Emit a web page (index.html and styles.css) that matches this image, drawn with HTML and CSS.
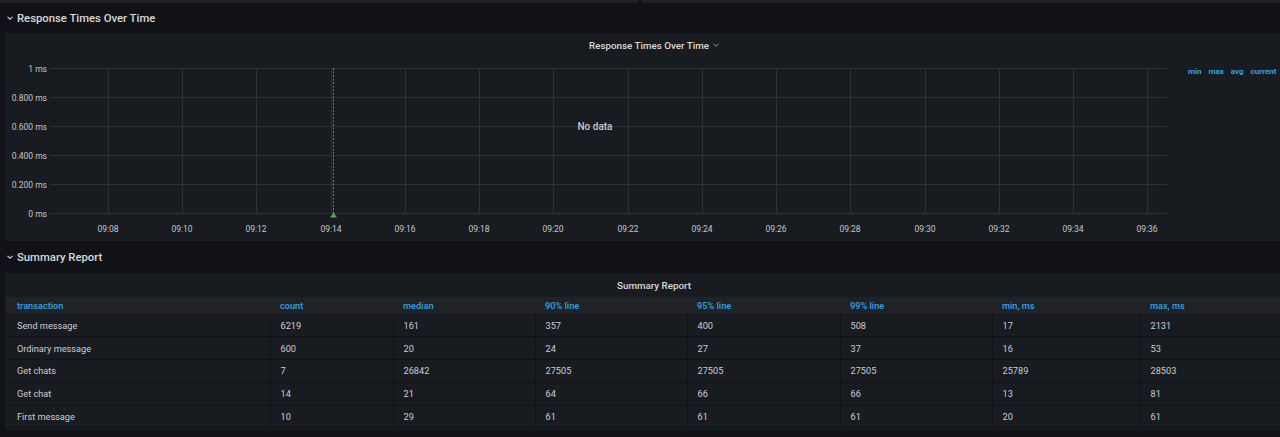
FILE: index.html
```html
<!DOCTYPE html>
<html lang="en">
<head>
<meta charset="utf-8">
<title>Dashboard</title>
<link rel="stylesheet" href="styles.css">
</head>
<body>
<div class="top-strip">
  <div class="strip-panel strip-left"></div>
  <div class="strip-panel strip-right"></div>
</div>

<div class="row-header">
  <svg class="chev" width="6" height="4" viewBox="0 0 6 4"><path d="M0.5 0.8 L3 3.2 L5.5 0.8" fill="none" stroke="#c7d0d9" stroke-width="1.1"/></svg>
  <span class="row-title">Response Times Over Time</span>
</div>

<section class="panel chart-panel">
  <div class="panel-title">Response Times Over Time
    <svg class="title-chev" width="6" height="4" viewBox="0 0 6 4"><path d="M0.5 0.8 L3 3.2 L5.5 0.8" fill="none" stroke="#8e8e8e" stroke-width="1"/></svg>
  </div>
  <div class="chart-body">
    <svg class="plot" width="1170" height="184" viewBox="0 0 1170 184">
      <g stroke="#2f3136" stroke-width="1">
        <line x1="45" y1="11.5" x2="1162" y2="11.5"/>
        <line x1="45" y1="40.5" x2="1162" y2="40.5"/>
        <line x1="45" y1="69.5" x2="1162" y2="69.5"/>
        <line x1="45" y1="98.5" x2="1162" y2="98.5"/>
        <line x1="45" y1="127.5" x2="1162" y2="127.5"/>
        <line x1="45" y1="156.5" x2="1162" y2="156.5"/>
        <line x1="103.5" y1="11" x2="103.5" y2="156"/>
        <line x1="177.5" y1="11" x2="177.5" y2="156"/>
        <line x1="251.5" y1="11" x2="251.5" y2="156"/>
        <line x1="326.5" y1="11" x2="326.5" y2="156"/>
        <line x1="400.5" y1="11" x2="400.5" y2="156"/>
        <line x1="474.5" y1="11" x2="474.5" y2="156"/>
        <line x1="548.5" y1="11" x2="548.5" y2="156"/>
        <line x1="623.5" y1="11" x2="623.5" y2="156"/>
        <line x1="697.5" y1="11" x2="697.5" y2="156"/>
        <line x1="771.5" y1="11" x2="771.5" y2="156"/>
        <line x1="845.5" y1="11" x2="845.5" y2="156"/>
        <line x1="920.5" y1="11" x2="920.5" y2="156"/>
        <line x1="994.5" y1="11" x2="994.5" y2="156"/>
        <line x1="1068.5" y1="11" x2="1068.5" y2="156"/>
        <line x1="1142.5" y1="11" x2="1142.5" y2="156"/>
      </g>
      <g class="ylab" text-anchor="end">
        <text x="42" y="14.5">1 ms</text>
        <text x="42" y="43.5">0.800 ms</text>
        <text x="42" y="72.5">0.600 ms</text>
        <text x="42" y="101.5">0.400 ms</text>
        <text x="42" y="130.5">0.200 ms</text>
        <text x="42" y="159.5">0 ms</text>
      </g>
      <g class="xlab" text-anchor="middle">
        <text x="103" y="174.5">09:08</text>
        <text x="177" y="174.5">09:10</text>
        <text x="251" y="174.5">09:12</text>
        <text x="326" y="174.5">09:14</text>
        <text x="400" y="174.5">09:16</text>
        <text x="474" y="174.5">09:18</text>
        <text x="548" y="174.5">09:20</text>
        <text x="623" y="174.5">09:22</text>
        <text x="697" y="174.5">09:24</text>
        <text x="771" y="174.5">09:26</text>
        <text x="845" y="174.5">09:28</text>
        <text x="920" y="174.5">09:30</text>
        <text x="994" y="174.5">09:32</text>
        <text x="1068" y="174.5">09:34</text>
        <text x="1142" y="174.5">09:36</text>
      </g>
      <line x1="328.5" y1="11" x2="328.5" y2="156" stroke="#4f9a44" stroke-width="1" stroke-dasharray="2 1.5"/>
      <polygon points="325,160.5 332,160.5 328.5,155.5" fill="#56a64b"/>
      <text class="nodata" x="590" y="73" text-anchor="middle">No data</text>
    </svg>
    <div class="legend">
      <span>min</span><span>max</span><span>avg</span><span>current</span>
    </div>
  </div>
</section>

<div class="row-header row-header-2">
  <svg class="chev" width="6" height="4" viewBox="0 0 6 4"><path d="M0.5 0.8 L3 3.2 L5.5 0.8" fill="none" stroke="#c7d0d9" stroke-width="1.1"/></svg>
  <span class="row-title">Summary Report</span>
</div>

<section class="panel table-panel">
  <div class="panel-title">Summary Report</div>
  <table class="report">
    <colgroup>
      <col class="c1"><col class="c2"><col class="c3"><col class="c4"><col class="c5"><col class="c6"><col class="c7"><col class="c8">
    </colgroup>
    <thead>
      <tr><th>transaction</th><th>count</th><th>median</th><th>90% line</th><th>95% line</th><th>99% line</th><th>min, ms</th><th>max, ms</th></tr>
    </thead>
    <tbody>
      <tr><td>Send message</td><td>6219</td><td>161</td><td>357</td><td>400</td><td>508</td><td>17</td><td>2131</td></tr>
      <tr><td>Ordinary message</td><td>600</td><td>20</td><td>24</td><td>27</td><td>37</td><td>16</td><td>53</td></tr>
      <tr><td>Get chats</td><td>7</td><td>26842</td><td>27505</td><td>27505</td><td>27505</td><td>25789</td><td>28503</td></tr>
      <tr><td>Get chat</td><td>14</td><td>21</td><td>64</td><td>66</td><td>66</td><td>13</td><td>81</td></tr>
      <tr><td>First message</td><td>10</td><td>29</td><td>61</td><td>61</td><td>61</td><td>20</td><td>61</td></tr>
    </tbody>
  </table>
</section>
</body>
</html>
```

FILE: styles.css
```css
* { box-sizing: border-box; }

html, body {
  margin: 0;
  padding: 0;
  background: #111217;
  height: 437px;
  overflow: hidden;
  font-family: Roboto, "Liberation Sans", Arial, sans-serif;
  color: #ccccdc;
}

.top-strip {
  display: flex;
  gap: 4px;
  height: 3px;
}
.strip-panel { background: #1d1f24; height: 3px; }
.strip-left { width: 638px; }
.strip-right { flex: 1; }

.row-header {
  height: 30px;
  display: flex;
  align-items: center;
  padding-left: 7px;
  gap: 4px;
}
.row-header-2 { height: 32px; }

.row-title {
  font-size: 11.3px;
  font-weight: 500;
  color: #d8d9da;
}

.panel {
  background: #181b1f;
  margin-left: 5px;
  width: 1298px;
}

.panel-title {
  height: 24px;
  display: flex;
  align-items: center;
  justify-content: center;
  gap: 4px;
  font-size: 9.8px;
  font-weight: 500;
  color: #d8d9da;
}

.chart-panel { height: 208px; }
.chart-body { display: flex; }
.plot { display: block; flex: none; }

.ylab text, .xlab text {
  font-family: Roboto, "Liberation Sans", Arial, sans-serif;
  font-size: 8.5px;
  fill: #c4c7cc;
}
.nodata {
  font-family: Roboto, "Liberation Sans", Arial, sans-serif;
  font-size: 10px;
  font-weight: 500;
  fill: #c7cad0;
}

.legend {
  display: flex;
  gap: 7px;
  padding-top: 10px;
  margin-left: 13px;
  font-size: 8px;
  font-weight: 700;
  color: #33a2e5;
  white-space: nowrap;
}

.table-panel { height: 157px; padding: 0 1px; }

.report {
  width: 1296px;
  table-layout: fixed;
  border-collapse: collapse;
  font-size: 9.2px;
}
.c1 { width: 264px; }
.c2 { width: 123px; }
.c3 { width: 142px; }
.c4 { width: 152px; }
.c5 { width: 153px; }
.c6 { width: 152px; }
.c7 { width: 148px; }
.c8 { width: 162px; }

.report th {
  background: #202226;
  color: #33a2e5;
  font-weight: 500;
  text-align: left;
  height: 17px;
  padding: 0 0 0 10px;
  border-bottom: 1px solid #131418;
}
.report td {
  height: 22.75px;
  padding: 0 0 0 10px;
  color: #ccccdc;
  border-bottom: 1px solid #111217;
  border-left: 1px solid #111217;
}
.report td:first-child { border-left: none; padding-left: 11px; }
.report th:first-child { padding-left: 11px; }
```
